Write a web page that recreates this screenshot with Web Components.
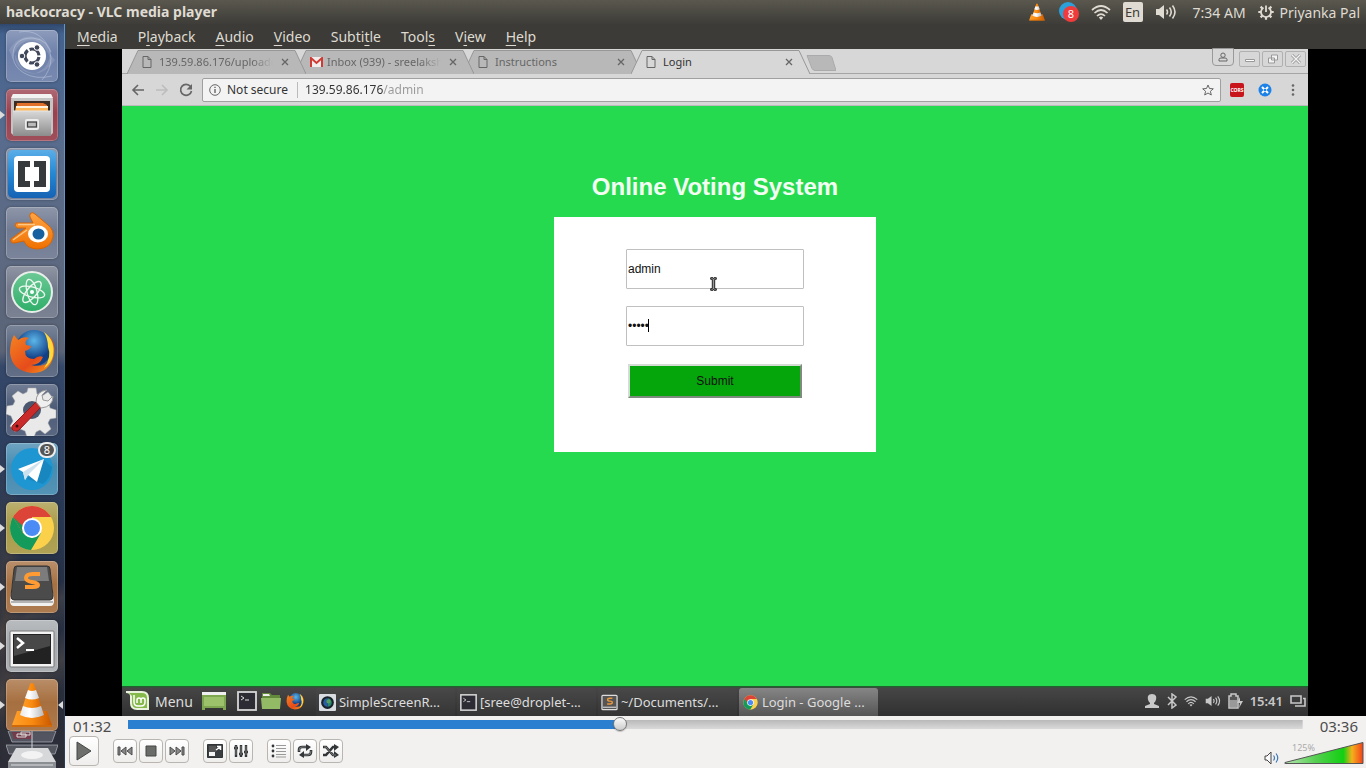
<!DOCTYPE html>
<html lang="en">
<head>
<meta charset="utf-8">
<title>hackocracy - VLC media player</title>
<style>
html,body{margin:0;height:100%}
body{font-family:"Noto Sans","Open Sans",sans-serif;font-size:14px;background:#000;overflow:hidden}
</style>
</head>
<body>
<desk-top>
  <top-panel slot="panel" heading="hackocracy - VLC media player"></top-panel>
  <side-launcher slot="launcher"></side-launcher>
  <menu-bar slot="main"></menu-bar>
  <video-stage slot="main">
    <browser-window>
      <login-page></login-page>
    </browser-window>
    <mint-taskbar></mint-taskbar>
  </video-stage>
  <player-controls slot="main"></player-controls>
</desk-top>
<script>
const ICONS = {
cone:['0 0 52 52',`<defs><linearGradient id="o" x1="0" x2="1"><stop offset="0" stop-color="#ffa12b"/><stop offset=".5" stop-color="#f98a10"/><stop offset="1" stop-color="#c95800"/></linearGradient><linearGradient id="w" x1="0" x2="1"><stop offset="0" stop-color="#e8e8e8"/><stop offset=".4" stop-color="#fff"/><stop offset="1" stop-color="#b8b8b8"/></linearGradient></defs><path d="M11 32h30l5 14v2H6v-2z" fill="url(#o)"/><path d="M6 46h40v2H6z" fill="#d06a08"/><path d="M24 5q2-2 4 0l10 31q-12 7-24 0z" fill="url(#o)"/><path d="M22 11q4 2 8 0l3 8q-7 3-14 0zM17 27q9 4 18 0l3 9q-12 6-24 0z" fill="url(#w)"/>`],
telegram8:['0 0 20 20',`<circle cx="9" cy="9" r="9" fill="#2ca0da"/><circle cx="12" cy="12" r="8" fill="#ef3b3b"/><text x="12" y="16" font-size="11" text-anchor="middle" fill="#fff">8</text>`],
wifi:['0 0 20 16',`<g fill="none" stroke="currentColor" stroke-width="1.700"><path d="M1 6q9-8 18 0M3.500 9q6.500-6 13 0M6 12q4-4 8 0"/></g><path d="M7.800 13.500q2.200-2 4.400 0L10 16z" fill="currentColor"/>`],
speaker:['0 0 22 16',`<path d="M1 5h3l5-4v14l-5-4H1z" fill="currentColor"/><g fill="none" stroke="currentColor" stroke-width="1.600"><path d="M11.500 5.500q2 2.500 0 5M14.500 3.500q3.500 4.500 0 9M17.500 1.500q5 6.500 0 13"/></g>`],
gear:['0 0 16 16',`<g fill="none" stroke="currentColor"><path d="M5.500 3.700A5 5 0 1 0 10.500 3.700" stroke-width="1.800"/><path d="M8 1.500v6.500" stroke-width="1.800"/><path d="M8 13v2.800M.3 8H3M13 8h2.700M2.600 13.400l1.900-1.900M13.400 13.400l-1.900-1.900M2.600 2.600l1.900 1.900M13.400 2.600l-1.900 1.900" stroke-width="2.200"/></g>`],
ubuntu:['0 0 52 52',`<g fill="none" stroke="#d3dcee" opacity=".4"><path d="M7 28Q6 8 26 8q18 1 19 20 0 12-9 22M13 2q22-4 32 20M46 46Q30 50 18 43 9 38 7 28"/></g><path d="M3 20Q14 2 34 8 44 14 44 28 36 7 20 11 8 16 7 30z" fill="#fff" opacity=".13"/><path d="M49 30Q37 48 20 42 8 36 9 24q6 20 21 19 13-5 14-19z" fill="#fff" opacity=".13"/><circle cx="26" cy="26" r="14" fill="#fff"/><circle cx="26" cy="26" r="7" fill="none" stroke="#41475a" stroke-width="3.200" stroke-dasharray="12.660 2" stroke-dashoffset="-1"/><g fill="#41475a" stroke="#fff" stroke-width="1"><circle cx="16" cy="26" r="2.800"/><circle cx="31" cy="17.500" r="2.800"/><circle cx="31" cy="34.500" r="2.800"/></g>`],
files:['0 0 52 52',`<defs><linearGradient id="c" y2="1" x2="0"><stop stop-color="#d8d8d8"/><stop offset="1" stop-color="#8c8c8c"/></linearGradient></defs><path d="M7 5h38l2 5v34l-3 3H8l-3-3V10z" fill="#c4c4c4"/><path d="M7 5h38l2 4H5z" fill="#f2f2f2"/><path d="M8 12h36v11H8z" fill="#3b2d26"/><path d="M11 14h26l4 2v6H10z" fill="#e0702a"/><path d="M10 17h32v6H9z" fill="#ffb75b"/><path d="M10 17h32v2H10z" fill="#fff2df"/><path d="M7 22h38v25H7z" fill="url(#c)"/><path d="M7 22h38" stroke="#e6e6e6"/><rect x="19" y="30" width="14" height="11" rx="2" fill="#ececec"/><rect x="21.500" y="33" width="9" height="5" fill="#bbb" stroke="#444" stroke-width="1.300"/>`],
brackets:['0 0 52 52',`<defs><linearGradient id="b" y2="1" x2="0"><stop stop-color="#5aaee8"/><stop offset=".5" stop-color="#2587d2"/><stop offset="1" stop-color="#1562b4"/></linearGradient></defs><rect x="2" y="2" width="48" height="48" rx="5" fill="url(#b)"/><rect x="8" y="8" width="36" height="36" rx="4" fill="#fff"/><path d="M12 13h12v6h-5v14h5v6H12zM28 13h12v26H28v-6h5V19h-5z" fill="#363a3d"/>`],
blender:['0 0 52 52',`<defs><linearGradient id="f" y2="1" x2="0"><stop stop-color="#ffa445"/><stop offset="1" stop-color="#ef7000"/></linearGradient></defs><path d="M25 6q2-1 4 1l13 11q6 5 5 12-2 11-15 12-11 0-14-8L8 36q-4 0-3-4l15-11h-9q-3-2-1-5h17l-3-6q-1-2 1-4z" fill="url(#f)" stroke="#d96400"/><path d="M12 17.500h17M7 33l14-10" stroke="#ffc887" stroke-width="1.500"/><ellipse cx="32" cy="27" rx="10" ry="8.500" fill="#fff"/><ellipse cx="32.500" cy="27" rx="6" ry="5.500" fill="#17609f"/>`],
atom:['0 0 52 52',`<defs><linearGradient id="a" y2="1" x2="0"><stop stop-color="#6cc995"/><stop offset="1" stop-color="#2fae69"/></linearGradient></defs><circle cx="26" cy="26" r="20" fill="url(#a)" stroke="#e8efea" stroke-width="2"/><g fill="none" stroke="#eef8f1" stroke-width="1.300"><ellipse cx="26" cy="26" rx="13" ry="5" transform="rotate(15 26 26)"/><ellipse cx="26" cy="26" rx="13" ry="5" transform="rotate(75 26 26)"/><ellipse cx="26" cy="26" rx="13" ry="5" transform="rotate(130 26 26)"/></g><circle cx="26" cy="26" r="2" fill="#fff"/>`],
firefox:['0 0 52 52',`<defs><radialGradient id="g" cx=".5" cy=".3"><stop stop-color="#5cb6e8"/><stop offset="1" stop-color="#123f86"/></radialGradient><linearGradient id="h" x2="1" y2="1"><stop stop-color="#f58220"/><stop offset=".6" stop-color="#e64c1b"/><stop offset="1" stop-color="#f7a11b"/></linearGradient></defs><circle cx="28" cy="23" r="18" fill="url(#g)"/><path d="M8 10l4 5q5-4 11-2-5 3-3 7l5 1q0 3-6 5 0 8 9 8 5-4 9-2-3 8-12 8 18 4 22-11 1-9-4-18 7 6 5 19-4 18-22 18Q6 46 4 28q0-11 4-18z" fill="url(#h)"/><path d="M38 7q12 9 9 24-2 8-9 12 8-11 4-21 0-8-4-15z" fill="#ffd83b"/>`],
settings:['0 0 52 52',`<g fill="#e9e9e9" stroke="#aaa" stroke-width=".5"><path d="M22 4h8l1 6 5 2 6-4 5 6-4 5 1 5 6 2v8l-6 1-2 4 3 6-6 5-5-4-4 2-2 5h-7l-2-6-5-2-5 3-5-6 3-5-2-5-5-2 1-8 6-1 2-4-3-5 6-5 5 3 4-2z"/></g><circle cx="26" cy="26" r="9" fill="#4b576e"/><path d="M7 41L30 18l5 5-22 23q-4 3-7-1-1-2 1-4z" fill="#c92a2a" stroke="#921919"/><path d="M30 18q0-11 11-12l-5 5 1 5 5 1 5-5q0 11-12 12z" fill="#efefef" stroke="#999"/><circle cx="11" cy="42" r="1.500" fill="#420d0d"/>`],
telegram:['0 0 52 52',`<circle cx="26" cy="26" r="21" fill="#1e96d2"/><path d="M37 16l9 8q-1 11-9 17L21 36z" fill="#147bb1" opacity=".55"/><path d="M12 26l26-10-7 23-9-7-3 5-2-8z" fill="#fff"/><path d="M17 29l21-13-16 16-3 5z" fill="#cde1ef"/>`],
chrome:['0 0 52 52',`<circle cx="26" cy="26" r="22" fill="#fbd14b"/><path d="M26 26L7 15A22 22 0 0 1 45 15H26z" fill="#dc4437"/><path d="M7 15A22 22 0 0 0 25 48l10-17-9 5-9-5z" fill="#149a5b"/><path d="M7 15l10 16 9-16z" fill="#dc4437"/><path d="M7 15l10 16 2-5z" fill="#149a5b"/><circle cx="26" cy="26" r="10" fill="#fff"/><circle cx="26" cy="26" r="8" fill="#4a8bf5"/>`],
sublime:['0 0 52 52',`<path d="M8 9L4 40q0 5 4 5h36q4 0 4-5L44 9z" fill="#f1f1f1"/><path d="M5 41h42" stroke="#777"/><path d="M11 5h30q3 0 3 3l3 27q0 4-3 4H8q-3 0-3-4L8 8q0-3 3-3z" fill="#4b4b4b" stroke="#333"/><path d="M11 6h30l2 14H9z" fill="#7c7c7c"/><path d="M34 13h-7q-7 0-7 4 0 3 6 4 6 1 6 3t-5 2h-8" fill="none" stroke="#ff9b32" stroke-width="4"/>`],
key:['0 0 18 17',`<rect x="1" y="1" width="16" height="15" rx="1" fill="#555" stroke="#ddd" stroke-width="1.300"/><path d="M2 13.500h14" stroke="#eee"/><path d="M12 4H9.500Q7 4 7 5.500T9.500 7Q12 7 12 8.500T9.500 10H6.500" fill="none" stroke="#e8973c" stroke-width="1.500"/>`],
terminal:['0 0 52 52',`<rect x="4" y="11" width="44" height="36" rx="1" fill="#f3f3f3" stroke="#777"/><rect x="7" y="14" width="38" height="30" fill="#222"/><path d="M8 15h36v11L8 36z" fill="#484848"/><path d="M11 18l6 5-6 5" fill="none" stroke="#fff" stroke-width="2.500"/><path d="M20 30h8" stroke="#fff" stroke-width="2"/>`],
stack:['0 0 52 37',`<path d="M2 0h48l-4 11H6zM0 14h52l-3 9H3z" fill="#aeb4bd" fill-opacity=".3" stroke="#c3c7cf" stroke-opacity=".6"/><path d="M6 1h20v7H8z" fill="#753c4b"/><path d="M11 3h9v3h-9zM15 1h9v3h-9z" fill="none" stroke="#ddd"/><path d="M26 0v19" stroke="#cfd3da"/><path d="M10 17h32l8 14H2z" fill="#d6d8da"/><path d="M2 31h48v6H2z" fill="#8b8f94"/><ellipse cx="26" cy="24" rx="11" ry="4" fill="#f3f3f3"/><path d="M5 34h42" stroke="#ddd"/>`],
page:['0 0 10 12',`<path d="M1 .5h5l3 3v8H1zM6 .5v3h3" fill="none" stroke="#666"/>`],
gmail:['0 0 13 10',`<path d="M0 0h13v10H0z" fill="#f1eded"/><path d="M1 10V1l5.500 5L12 1v9" fill="none" stroke="#d03b34" stroke-width="2"/>`],
close:['0 0 8 8',`<path d="M1 1l6 6M7 1L1 7" stroke="#666" stroke-width="1.300"/>`],
back:['0 0 14 12',`<path d="M13 6H2M7 1L2 6l5 5" fill="none" stroke="currentColor" stroke-width="1.600"/>`],
forward:['0 0 14 12',`<path d="M1 6h11M7 1l5 5-5 5" fill="none" stroke="currentColor" stroke-width="1.600"/>`],
reload:['0 0 14 14',`<path d="M11.500 3.500A5.500 5.500 0 1 0 12.500 8" fill="none" stroke="currentColor" stroke-width="1.700"/><path d="M13 1v5.500H7.500z" fill="currentColor"/>`],
info:['0 0 12 12',`<circle cx="6" cy="6" r="5.300" fill="none" stroke="#666"/><path d="M6 5v4M6 2.800v1.300" stroke="#666" stroke-width="1.400"/>`],
star:['0 0 12 12',`<path d="M6 1l1.500 3.500 3.800.3-2.900 2.500.9 3.700L6 9l-3.300 2 .9-3.700L.7 4.800l3.800-.3z" fill="none" stroke="#666"/>`],
hub:['0 0 14 14',`<circle cx="7" cy="7" r="6.500" fill="#1c82e8"/><path d="M4 4l6 6M10 4l-6 6" stroke="#fff" stroke-width="2"/><circle cx="7" cy="7" r="1.300" fill="#1c82e8"/>`],
dots:['0 0 4 12',`<g fill="#666"><circle cx="2" cy="1.500" r="1.300"/><circle cx="2" cy="6" r="1.300"/><circle cx="2" cy="10.500" r="1.300"/></g>`],
person:['0 0 10 10',`<circle cx="5" cy="3.200" r="2.200" fill="none" stroke="#666"/><path d="M1 9V7.500Q1 6 3 6h4q2 0 2 1.500V9z" fill="none" stroke="#666"/>`],
min:['0 0 12 10',`<path d="M1.500 5.500h9v2h-9z" fill="#fff" stroke="#999"/>`],
restore:['0 0 12 10',`<path d="M4.500 1h6v5h-6zM1.500 4h6v5h-6z" fill="#f4f4f4" stroke="#999"/>`],
shut:['0 0 12 10',`<path d="M2 1l8 8M10 1L2 9" stroke="#999" stroke-width="3"/><path d="M2 1l8 8M10 1L2 9" stroke="#f4f4f4" stroke-width="1.300"/>`],
mint:['0 0 24 20',`<path d="M0 0h16q7 0 7 7v12H11q-7 0-7-7V5Q4 2 0 2z" fill="#e9f3dc"/><path d="M3 2h13q5 0 5 5v10H11q-5 0-5-5V5z" fill="#86b94c"/><path d="M8 4v7q0 4 4 4h3q4 0 4-4V9q0-2-2-2t-2 2v3M15 9q0-2-2-2t-2 2v3" fill="none" stroke="#fff" stroke-width="1.500"/>`],
desk:['0 0 26 20',`<path d="M1 1h24v18h-3v-2H4v2H1z" fill="#7fa650"/><path d="M1 1h24v3H1z" fill="#f0f0f0"/><path d="M3 6h20v9H3z" fill="#9cc36c"/>`],
term:['0 0 20 20',`<rect x="1" y="1" width="18" height="18" fill="#2d2c35" stroke="#d6d6d6" stroke-width="1.800"/><path d="M4 5l3 2-3 2M8 9h4" fill="none" stroke="#ddd"/>`],
folder:['0 0 20 18',`<path d="M1 1h8l2 2h8v4H1z" fill="#638a3b"/><path d="M2 2h6l1 2H2z" fill="#eee"/><path d="M0 6h20l-1 11H1z" fill="#93ba65"/>`],
recorder:['0 0 16 16',`<rect width="16" height="16" rx="1" fill="#d9dde2"/><circle cx="8" cy="8" r="6" fill="#18202a"/><path d="M8 4a4 4 0 0 1 0 8z" fill="#278570"/><path d="M8 4a4 4 0 0 0 0 8z" fill="#295da3"/><circle cx="9" cy="7" r="2" fill="#55a05c"/>`],
user:['0 0 16 16',`<path d="M1 15v-2l5-2v-1Q3 7 4 3q1-2 4-2t4 2q1 4-2 7v1l5 2v2z" fill="currentColor"/>`],
bt:['0 0 10 16',`<path d="M1 4l8 8-4 3V1l4 3-8 8" fill="none" stroke="currentColor" stroke-width="1.500"/>`],
batt:['0 0 15 16',`<path d="M1 3h2V1h5v2h2v12H1z" fill="#555" stroke="currentColor" stroke-width="1.500"/><path d="M2 7h7v7H2z" fill="#999"/><path d="M12 4l-3 6h3l-1 5 4-7h-3z" fill="currentColor"/>`],
windows:['0 0 16 12',`<path d="M1 1h10v7H1z" fill="none" stroke="currentColor" stroke-width="1.600"/><path d="M13 3.500h2V11H5" fill="none" stroke="currentColor" stroke-width="1.600"/>`],
play:['0 0 16 20',`<path d="M1 1l14 9L1 19z" fill="#6c6f6b" stroke="#454745"/>`],
prev:['0 0 16 10',`<path d="M1 1h2v8H1zM9 1v8L4 5zM15 1v8l-5-4z" fill="#888" stroke="#4b4d4b"/>`],
stop:['0 0 12 12',`<path d="M1 1h10v10H1z" fill="#6a6c69" stroke="#454745"/>`],
next:['0 0 16 10',`<path d="M13 1h2v8h-2zM7 1v8l5-4zM1 1v8l5-4z" fill="#888" stroke="#4b4d4b"/>`],
full:['0 0 16 14',`<path d="M.5.5h15v13H.5z" fill="#3a3e40" stroke="#303334"/><path d="M2 2h7v6H2z" fill="#555"/><path d="M2 8h6v4H2z" fill="#f4f4f4"/><path d="M9 6l4-3M10 2.500h3.500V6" fill="none" stroke="#fff" stroke-width="1.500"/>`],
eq:['0 0 16 14',`<path d="M3 1v12M8 1v12M13 1v12" stroke="#333638" stroke-width="2.400"/><path d="M1 4h4M6 10h4M11 8h4" stroke="#333638" stroke-width="2.400"/><path d="M3 2v9M8 2v9M13 2v9" stroke="#a5a5a5" stroke-width=".6"/>`],
list:['0 0 16 14',`<g fill="#333638"><circle cx="2" cy="2" r="1.400"/><circle cx="2" cy="7" r="1.400"/><circle cx="2" cy="12" r="1.400"/></g><path d="M5 1.500h10M5 4.500h10M5 7.500h10M5 10.500h10M5 13h10" stroke="#999"/>`],
loop:['0 0 16 14',`<path d="M2 8V6q0-3 3-3h4M14 6v2q0 3-3 3H7" fill="none" stroke="#333638" stroke-width="2.600"/><path d="M9 0l5 3-5 4zM7 7l-5 4 5 3z" fill="#333638"/><path d="M2 7q0-4 3-4h4M14 7q0 4-3 4H7" fill="none" stroke="#aaa" stroke-width=".6"/>`],
shuffle:['0 0 16 14',`<path d="M0 3h3l7 8h2M0 11h3l7-8h2" fill="none" stroke="#333638" stroke-width="2.600"/><path d="M11 0l5 3-5 4zM11 7l5 4-5 3z" fill="#333638"/><path d="M1 3h2l7 8h3" fill="none" stroke="#aaa" stroke-width=".6"/>`],
sound:['0 0 16 14',`<path d="M1 5h2l4-4v12L3 9H1z" fill="#fafafa" stroke="#444"/><path d="M9.500 4.500q2 2.500 0 5M12 2.500q3.500 4.500 0 9" fill="none" stroke="#3d78b8" stroke-width="1.200"/>`],
ibeam:['0 0 7 14',`<path d="M.7.700h2.300l.5 1 .5-1h2.300v1.600H4.700v9.400h1.600v1.600H4l-.5-1-.5 1H.7v-1.600h1.600V2.300H.7z" fill="#999" stroke="#222"/>`]
};
const define=(name,css,html,setup)=>{
  const t=document.createElement('template');
  t.innerHTML='<style>*{box-sizing:border-box}button{font:inherit;color:inherit;background:none;border:0;padding:0;margin:0}'+css+'</style>'+html;
  customElements.define(name,class extends HTMLElement{
    connectedCallback(){
      if(this.shadowRoot)return;
      const r=this.attachShadow({mode:'open'});
      r.append(t.content.cloneNode(true));
      if(setup)setup(this,r);
    }
  });
};
define('ui-icon',':host{display:block;flex:none}svg{display:block;width:100%;height:100%}','',(el,r)=>{
  const [box,body]=ICONS[el.getAttribute('name')];
  const [, ,w,h]=box.split(' ');
  const d=document.createElement('div');
  d.innerHTML=`<svg viewBox="${box}" aria-hidden="true">${body}</svg>`;
  d.style.width=(el.getAttribute('w')||w)+'px';
  d.style.height=(el.getAttribute('h')||h)+'px';
  r.append(d);
});
define('desk-top',`:host{display:grid;grid-template:24px minmax(0,1fr)/65px minmax(0,1fr);height:100vh}
::slotted([slot=panel]){grid-column:1/3}
main{display:flex;flex-direction:column;min-height:0}`,
`<slot name="panel"></slot><slot name="launcher"></slot><main><slot name="main"></slot></main>`);
define('top-panel',`:host{display:flex;align-items:center;justify-content:space-between;padding:0 6px;background:linear-gradient(#5a584e,#45443e 70%,#3e3d39);color:#dfdbd2}
h1{margin:0;font-size:14px;line-height:24px;font-weight:700}
div{display:flex;align-items:center;gap:12px}
.lang{width:20px;height:20px;border-radius:2px;background:#dfdbd2;color:#3c3b37;font-size:13px;line-height:20px;text-align:center}
.time{margin:0 0 0 4px}.me{display:flex;align-items:center;gap:6px}`,
`<h1></h1><div><ui-icon name="cone" w="20" h="22"></ui-icon><ui-icon name="telegram8"></ui-icon><ui-icon name="wifi"></ui-icon><button class="lang">En</button><ui-icon name="speaker"></ui-icon><button class="time">7:34 AM</button><button class="me"><ui-icon name="gear"></ui-icon>Priyanka Pal</button></div>`,
(el,r)=>r.querySelector('h1').textContent=el.getAttribute('heading'));
define('launcher-tile',`:host{display:block;position:relative;height:52px;padding:0 7px 0 6px}
button{display:block;width:52px;height:52px;border-radius:5px;background:linear-gradient(#ffffff44,#ffffff11 45%,#ffffff22),var(--tint);box-shadow:inset 0 0 0 1px #ffffff38,0 0 3px #0005}
i{position:absolute;top:22px;border:4px solid transparent;display:none}
:host([running]) .l{display:block;left:0;border-left:5px solid #dcdcdc;border-right:0}
:host([active]) .r{display:block;right:1px;border-right:5px solid #dcdcdc;border-left:0}
b{position:absolute;left:38px;top:-1px;width:18px;height:16px;border-radius:8px;border:2px solid #eee;background:#555;color:#fff;font-size:11px;line-height:12px;font-weight:400;text-align:center}`,
`<i class="l"></i><button></button><i class="r"></i>`,(el,r)=>{
  r.querySelector('button').innerHTML=`<ui-icon name="${el.getAttribute('icon')}"></ui-icon>`;
  r.querySelector('button').setAttribute('aria-label',el.getAttribute('icon'));
  if(el.hasAttribute('badge')){const b=document.createElement('b');b.textContent=el.getAttribute('badge');r.append(b);}
});
define('side-launcher',`:host{display:block;overflow:hidden;border-right:1px solid;border-image:linear-gradient(#5c97d6,#6f93bd 40%,#3f5878 46%,#2c3d58) 1;background:linear-gradient(#14213a66,#14213a00 10px),radial-gradient(ellipse at 10% 78%,#57483d88,transparent 20%),linear-gradient(150deg,transparent 76%,#6a5c5255 78%,transparent 82%,#7f6d5b44 86%,transparent 90%),linear-gradient(#42618e,#586c8e 15%,#5d6a82 30%,#5b6477 44%,#35486a 46%,#2a3b59 62%,#252f42 76%,#2c2d36)}
nav{display:flex;flex-direction:column;gap:7px;padding-top:6px}
.stack{margin:-7px 0 0 6px}`,
`<nav>
<launcher-tile icon="ubuntu" style="--tint:#6478a4"></launcher-tile>
<launcher-tile icon="files" running style="--tint:#923342"></launcher-tile>
<launcher-tile icon="brackets" style="--tint:#667490"></launcher-tile>
<launcher-tile icon="blender" style="--tint:#66718a"></launcher-tile>
<launcher-tile icon="atom" style="--tint:#676f82"></launcher-tile>
<launcher-tile icon="firefox" style="--tint:#4a5974"></launcher-tile>
<launcher-tile icon="settings" style="--tint:#40506e"></launcher-tile>
<launcher-tile icon="telegram" running badge="8" style="--tint:#3a83ab"></launcher-tile>
<launcher-tile icon="chrome" running style="--tint:#a3943c"></launcher-tile>
<launcher-tile icon="sublime" running style="--tint:#a06735"></launcher-tile>
<launcher-tile icon="terminal" running style="--tint:#a0a4a8"></launcher-tile>
<launcher-tile icon="cone" running active style="--tint:#a06532"></launcher-tile>
<ui-icon class="stack" name="stack"></ui-icon>
</nav>`);
define('menu-bar',`:host{display:flex;flex:none;gap:20px;height:25px;padding:0 12px;background:#3c3b37;color:#dfdbd2}
button{line-height:25px}u{text-underline-offset:3px;text-decoration-thickness:1px;text-decoration-skip-ink:none}`,
`<button><u>M</u>edia</button><button>P<u>l</u>ayback</button><button><u>A</u>udio</button><button><u>V</u>ideo</button><button>Subti<u>t</u>le</button><button>Tool<u>s</u></button><button>V<u>i</u>ew</button><button><u>H</u>elp</button>`);
define('video-stage',`:host{display:flex;flex-direction:column;flex:1;min-height:0;padding:0 58px 0 57px;background:#000}
::slotted(browser-window){flex:1;min-height:0}`,`<slot></slot>`);
define('browser-tab',`:host{display:block;position:relative;width:179px;height:24px;margin-right:-11px;color:#666}
.shape{position:absolute;inset:0;width:100%;height:100%;fill:#b8b8b8;stroke:#979797}
:host([selected]){color:#333;z-index:9}:host([selected]) .shape{fill:#d7d7d7}
.row{position:relative;display:grid;grid-template-columns:17px minmax(0,1fr) 8px;align-items:center;height:24px;padding:0 17px 0 15px}
.title{overflow:hidden;white-space:nowrap;font-size:11px;line-height:24px;text-align:left;margin-right:8px;-webkit-mask:linear-gradient(90deg,#000 82%,transparent)}
:host([selected]) .title,:host([short]) .title{-webkit-mask:none}`,
`<svg class="shape" viewBox="0 0 179 24" preserveAspectRatio="none"><path d="M0 24L11 .5H168L179 24"/></svg><div class="row"><span class="fav"></span><button class="title"><slot></slot></button><button aria-label="Close tab"><ui-icon name="close"></ui-icon></button></div>`,
(el,r)=>r.querySelector('.fav').innerHTML=`<ui-icon name="${el.getAttribute('icon')}"></ui-icon>`);
define('browser-window',`:host{display:flex;flex-direction:column;background:#d7d7d7}
.strip{display:flex;flex:none;height:25px;padding:1px 2px 0 5px;border-bottom:1px solid #a5a5a5}
.new{width:30px;height:16px;margin:5px 0 0 7px}
.new svg{display:block}
.win{display:flex;gap:2px;margin-left:auto}
.win button{display:grid;place-items:center;width:21px;height:16px;margin-top:1px;border:1px solid #b0b0b0;border-radius:2px}
.win .acct{margin:-2px 3px 0 0;height:18px;width:22px;border-color:#999;border-radius:0 0 4px 4px}
.strip browser-tab:nth-child(1){z-index:3}.strip browser-tab:nth-child(2){z-index:2}
.bar{display:flex;flex:none;align-items:center;height:32px;padding:0 13px 0 9px;color:#666;border-bottom:1px solid #bbb}
.nav{display:flex;gap:10px;align-items:center;margin-right:9px}
.nav .off{color:#bdbdbd}
.addr{display:flex;flex:1;align-items:center;height:24px;padding:0 6px;border:1px solid #a0a0a0;border-radius:2px;background:#f3f3f3;font-size:12px;color:#333}
.addr span{margin:0 7px 0 6px;padding-right:9px;border-right:1px solid #bbb;line-height:16px}
input{flex:1;min-width:0;border:0;padding:0;font:inherit;line-height:20px;color:transparent;background:linear-gradient(90deg,#333 78px,#999 78px);-webkit-background-clip:text;background-clip:text}
.ext{display:flex;align-items:center;gap:14px;margin-left:9px}
.cors{width:14px;height:14px;border-radius:2px;background:#c8151b;color:#fff;font-size:5px;line-height:14px;font-weight:700;text-align:center}
.ext .more{margin-left:5px}`,
`<div class="strip"><browser-tab icon="page">139.59.86.176/uploadde</browser-tab><browser-tab icon="gmail">Inbox (939) - sreelakshm</browser-tab><browser-tab icon="page" short>Instructions</browser-tab><browser-tab icon="page" selected>Login</browser-tab>
<button class="new" aria-label="New tab"><svg width="30" height="16"><path d="M1 .500h22q2 0 3 2l4 13H9q-2 0-3-2z" fill="#b8b8b8" stroke="#aaa"/></svg></button>
<div class="win"><button class="acct" aria-label="Account"><ui-icon name="person"></ui-icon></button><button aria-label="Minimise"><ui-icon name="min"></ui-icon></button><button aria-label="Restore"><ui-icon name="restore"></ui-icon></button><button aria-label="Close"><ui-icon name="shut"></ui-icon></button></div></div>
<div class="bar"><div class="nav"><button aria-label="Back"><ui-icon name="back"></ui-icon></button><button class="off" aria-label="Forward"><ui-icon name="forward"></ui-icon></button><button aria-label="Reload"><ui-icon name="reload"></ui-icon></button></div>
<div class="addr"><ui-icon name="info"></ui-icon><span>Not secure</span><input aria-label="Address" value="139.59.86.176/admin" spellcheck="false"><ui-icon name="star"></ui-icon></div>
<div class="ext"><button class="cors">CORS</button><button aria-label="Hub"><ui-icon name="hub"></ui-icon></button><button class="more" aria-label="More"><ui-icon name="dots"></ui-icon></button></div></div><slot></slot>`);
define('login-page',`:host{display:flex;flex:1;flex-direction:column;align-items:center;background:#26da50;font-family:"Liberation Sans",Arial,sans-serif;padding-top:67px}
h2{margin:0 0 16px;font-size:24px;line-height:28px;color:#f4fff4}
form{display:flex;flex-direction:column;align-items:center;gap:17px;width:322px;height:235px;padding-top:32px;background:#fff}
label{position:relative;display:block}
input{display:block;width:178px;height:40px;border:1px solid #c0c0c0;border-radius:1px;padding:1px;font:12px "Liberation Sans",Arial,sans-serif;color:#111;background:#fff}
.caret{position:absolute;left:22px;top:13px;width:1px;height:13px;background:#000}
.mouse{position:absolute;left:84px;top:28px}
button{width:174px;height:34px;margin-top:1px;border:2px solid;border-color:#d5dcd5 #7e8c7e #7e8c7e #d5dcd5;background:#05a50c;color:#111;font-size:12px}`,
`<h2>Online Voting System</h2><form><label><input type="text" aria-label="Username" value="admin" spellcheck="false"><ui-icon class="mouse" name="ibeam"></ui-icon></label><label><input type="password" aria-label="Password" value="admin"><span class="caret"></span></label><button type="button">Submit</button></form>`);
define('task-button',`:host{display:block;width:139px}
button{display:flex;align-items:center;gap:3px;width:100%;height:28px;padding:0 3px;border-radius:3px 3px 0 0;background:linear-gradient(#484848,#353535);font-size:13px;white-space:nowrap}
:host([active]) button{background:linear-gradient(#868686,#555)}`,`<button><span></span><slot></slot></button>`,
(el,r)=>r.querySelector('span').innerHTML=`<ui-icon name="${el.getAttribute('icon')}" w="17" h="17"></ui-icon>`);
define('mint-taskbar',`:host{display:flex;flex:none;align-items:center;height:30px;padding:0 2px 0 4px;background:linear-gradient(#245f31 0 1px,#464646 2px,#303030);color:#ddd}
.menu{display:flex;align-items:center;gap:5px}
.quick{display:flex;align-items:center;gap:4px;margin:0 11px 0 8px}
.quick button:first-child{margin-right:6px}
.tasks{display:flex;gap:2px;align-self:end}
.tray{display:flex;align-items:center;gap:7px;margin-left:auto;color:#c8c8c8}
b{font-size:13px;font-weight:600}`,
`<button class="menu"><ui-icon name="mint"></ui-icon>Menu</button>
<div class="quick"><button aria-label="Desktop"><ui-icon name="desk"></ui-icon></button><button aria-label="Terminal"><ui-icon name="term"></ui-icon></button><button aria-label="Files"><ui-icon name="folder"></ui-icon></button><button aria-label="Firefox"><ui-icon name="firefox" w="20" h="20"></ui-icon></button></div>
<div class="tasks"><task-button icon="recorder">SimpleScreenR...</task-button><task-button icon="term">[sree@droplet-...</task-button><task-button icon="key">~/Documents/...</task-button><task-button icon="chrome" active>Login - Google ...</task-button></div>
<div class="tray"><ui-icon name="user"></ui-icon><ui-icon name="bt"></ui-icon><ui-icon name="wifi" w="14" h="12"></ui-icon><ui-icon name="speaker" w="16" h="14"></ui-icon><ui-icon name="batt"></ui-icon><b>15:41</b><ui-icon name="windows"></ui-icon></div>`);
define('tool-button',`:host{display:block}
button{display:grid;place-items:center;width:24px;height:24px;border:1px solid #b9b5b0;border-radius:4px;background:linear-gradient(#fff,#efeeed)}
:host([large]) button{width:30px;height:30px}`,`<button></button>`,(el,r)=>{
  const b=r.querySelector('button');b.innerHTML=`<ui-icon name="${el.getAttribute('icon')}"></ui-icon>`;b.setAttribute('aria-label',el.getAttribute('icon'));});
define('player-controls',`:host{display:block;flex:none;height:52px;background:#f2f1f0;color:#4c4c4c}
.seek{display:flex;align-items:center;gap:17px;height:20px;padding:0 8px;font-size:15px;line-height:20px}
input{flex:1;min-width:0;margin:0 0 4px;height:16px;-webkit-appearance:none;appearance:none;background:linear-gradient(90deg,#2a7fd0 42%,transparent 42%) center/100% 9px no-repeat,linear-gradient(#b9b9b9,#d9d9d9) center/100% 9px no-repeat;border-radius:4px}
input::-webkit-slider-thumb{-webkit-appearance:none;width:14px;height:14px;border-radius:7px;border:1px solid #777;background:linear-gradient(#fafafa,#ccc);box-shadow:0 1px 1px #0003}
.row{display:flex;align-items:center;padding:0 2px 0 4px;height:30px}
.group{display:flex;gap:2px;margin-left:14px}
.vol{display:flex;align-items:end;gap:4px;margin:4px 0 0 auto}
.wedge{position:relative;width:80px;height:24px}
.wedge span{position:absolute;left:8px;top:1px;font-size:9px;line-height:12px;color:#aaa}
svg{display:block}`,
`<div class="seek"><span>01:32</span><input type="range" aria-label="Position" min="0" max="1000" value="418"><span>03:36</span></div>
<div class="row"><tool-button icon="play" large></tool-button>
<div class="group"><tool-button icon="prev"></tool-button><tool-button icon="stop"></tool-button><tool-button icon="next"></tool-button></div>
<div class="group"><tool-button icon="full"></tool-button><tool-button icon="eq"></tool-button></div>
<div class="group"><tool-button icon="list"></tool-button><tool-button icon="loop"></tool-button><tool-button icon="shuffle"></tool-button></div>
<div class="vol"><ui-icon name="sound"></ui-icon><div class="wedge"><svg width="80" height="24"><defs><linearGradient id="v" x2="1"><stop stop-color="#b9e6b5"/><stop offset=".4" stop-color="#55cf50"/><stop offset=".75" stop-color="#12d012"/><stop offset=".86" stop-color="#f5b01c"/><stop offset="1" stop-color="#f4401a"/></linearGradient></defs><path d="M1 21.500L79 1.500v21H2q-2 0-1-1z" fill="url(#v)" stroke="#555"/></svg><span>125%</span></div></div></div>`);
</script>
</body>
</html>
